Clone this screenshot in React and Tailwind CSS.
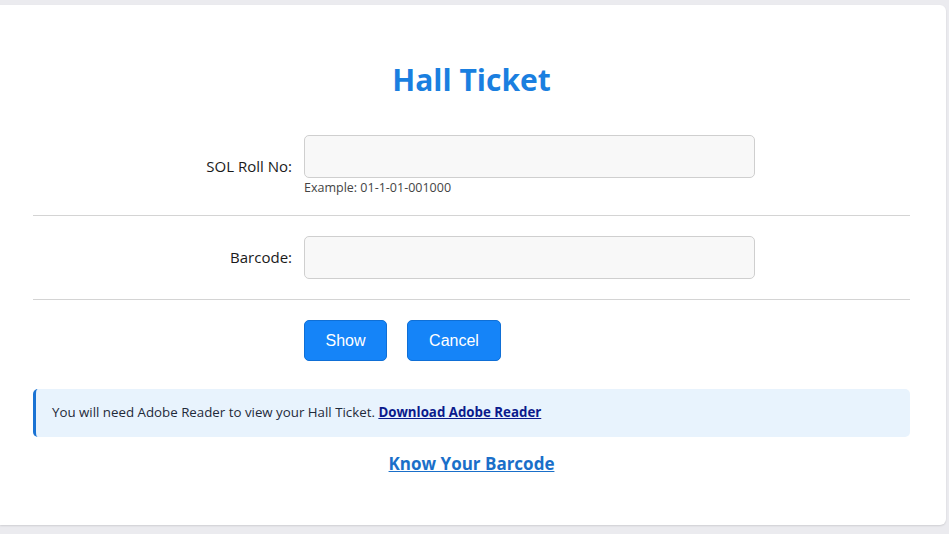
export default function App() {
  return (
    <div className="min-h-[534px] bg-[#ebebef] pt-[5px] pb-[8px]" style={{ fontFamily: '"Open Sans", "Noto Sans", sans-serif' }}>
      <div className="w-[946px] h-[520px] bg-white rounded-r-[6px] shadow-[0_1px_2px_rgba(0,0,0,0.12)] pl-[33px] pr-[36px] pt-[55px]">
        <h1 className="text-center text-[30px] font-bold text-[#1a7fe0] leading-[40px]">Hall Ticket</h1>

        <div className="mt-[35px] flex">
          <label className="w-[259px] text-right text-[15px] text-[#1a1a1a] pt-[20px]">SOL Roll No:</label>
          <div className="ml-[12px]">
            <input className="w-[451px] h-[43px] bg-[#f8f8f8] border border-[#cfcfcf] rounded-[5px] px-3 outline-none" />
            <div className="text-[12.5px] text-[#444] mt-[1px] leading-[17px]">Example: 01-1-01-001000</div>
          </div>
        </div>

        <div className="mt-[19px] border-t border-[#d4d4d4]" />

        <div className="mt-[20px] flex items-center">
          <label className="w-[259px] text-right text-[15px] text-[#1a1a1a]">Barcode:</label>
          <input className="ml-[12px] w-[451px] h-[43px] bg-[#f8f8f8] border border-[#cfcfcf] rounded-[5px] px-3 outline-none" />
        </div>

        <div className="mt-[20px] border-t border-[#d4d4d4]" />

        <div className="mt-[20px] flex gap-[20px] pl-[271px]" style={{ fontFamily: '"Liberation Sans", Arial, sans-serif' }}>
          <button className="w-[83px] h-[41px] bg-[#1584f8] border border-[#0f6fd6] text-white text-[16px] rounded-[5px]">Show</button>
          <button className="w-[94px] h-[41px] bg-[#1584f8] border border-[#0f6fd6] text-white text-[16px] rounded-[5px]">Cancel</button>
        </div>

        <div className="mt-[28px] h-[48px] bg-[#e8f3fd] border-l-[3px] border-[#1a73d4] rounded-[5px] flex items-center pl-[16px] text-[13.3px] text-[#1f2a3a]">
          <span>You will need Adobe Reader to view your Hall Ticket. <a href="#" className="font-bold underline text-[#0b1a8c]">Download Adobe Reader</a></span>
        </div>

        <div className="mt-[14px] text-center">
          <a href="#" className="text-[17px] font-bold underline text-[#1a6fc9]">Know Your Barcode</a>
        </div>
      </div>
    </div>
  );
}
